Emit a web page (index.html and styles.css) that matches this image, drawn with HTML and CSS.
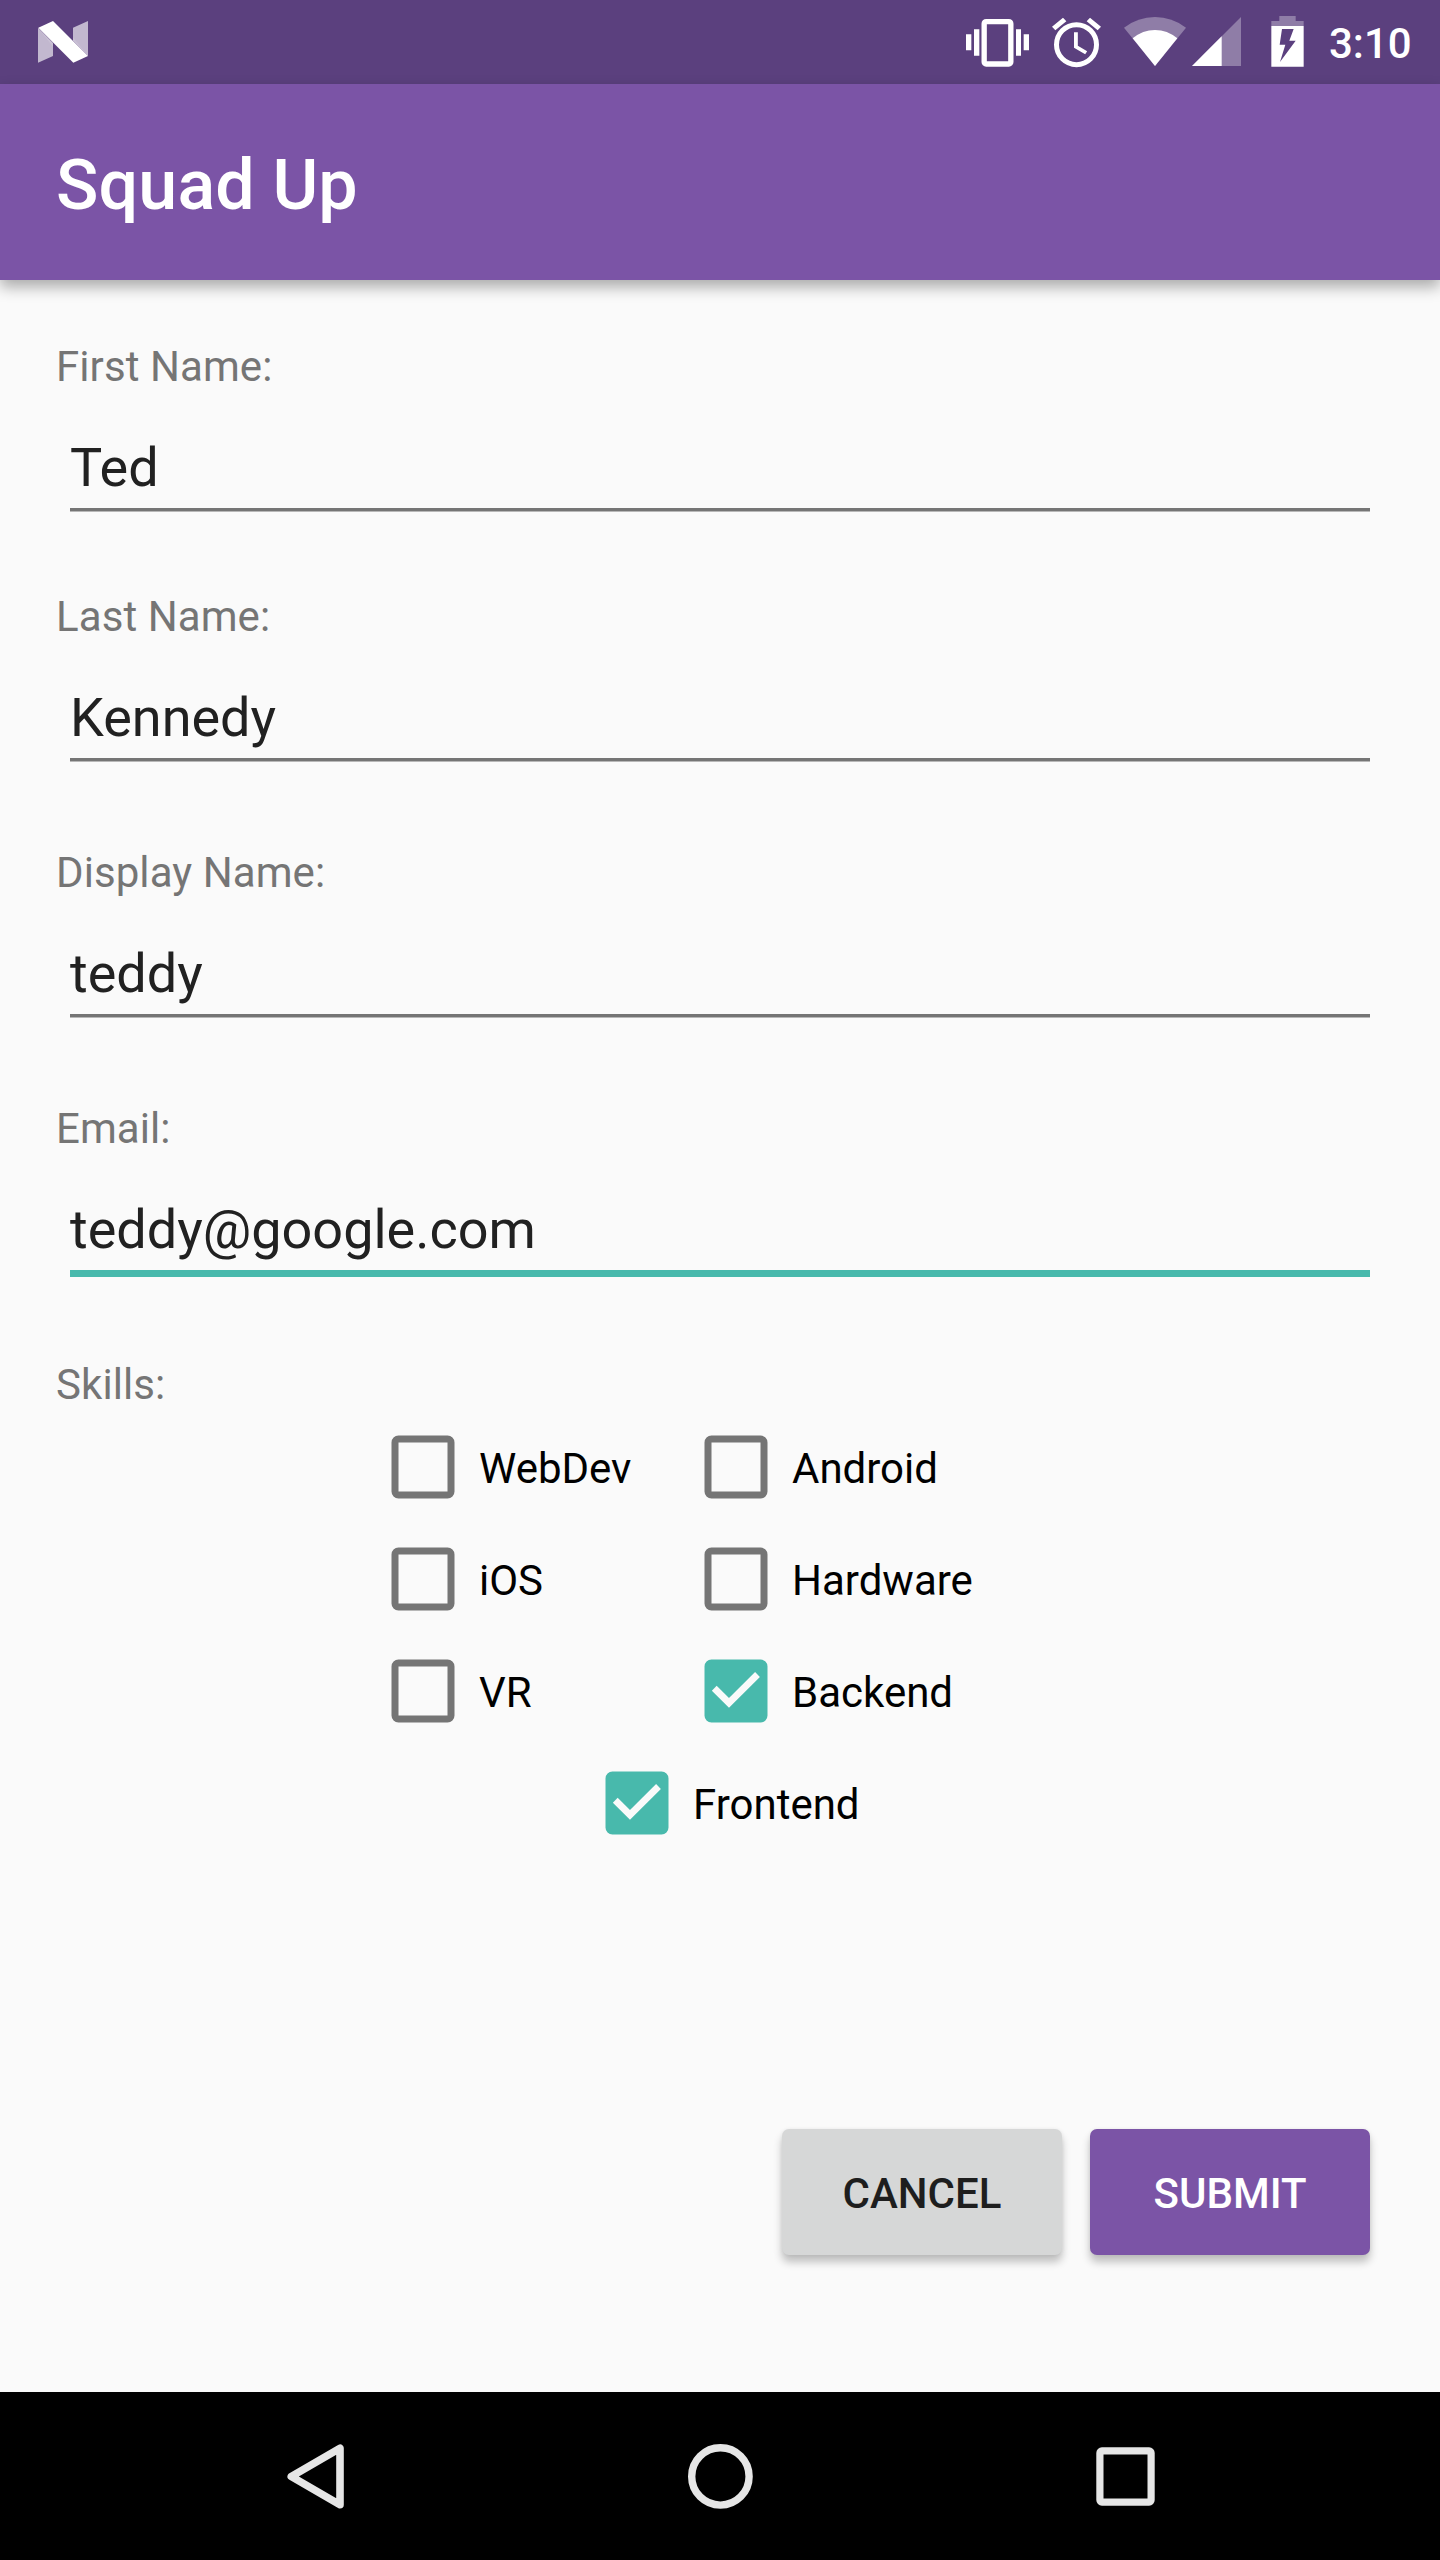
FILE: index.html
```html
<!DOCTYPE html>
<html lang="en">
<head>
<meta charset="utf-8">
<title>Squad Up</title>
<link rel="stylesheet" href="styles.css">
</head>
<body>
<svg class="defs" width="0" height="0" aria-hidden="true">
  <symbol id="box-off" viewBox="0 0 24 24"><rect x="4" y="4" width="16" height="16" rx="1" fill="none" stroke="#757575" stroke-width="2"/></symbol>
  <symbol id="box-on" viewBox="0 0 24 24"><path fill="#48b9ac" d="M19 3H5a2 2 0 0 0-2 2v14a2 2 0 0 0 2 2h14a2 2 0 0 0 2-2V5a2 2 0 0 0-2-2zM10 16.8l-4.9-4.9 1.38-1.38L10 14l7.45-7.4 1.38 1.38z"/></symbol>
</svg>
<div class="screen">
  <header class="status">
    <svg class="logo" width="50" height="42" viewBox="114 63 150 126" fill="#fff">
      <path opacity=".63" d="M114 83L159 129V168L114 188zM219 83L264 63V168L219 122z"/>
      <path opacity=".12" d="M114 83L159 129V140zM264 168L219 122V112z"/>
      <path d="M115 83L159 63L264 168L220 188z"/>
    </svg>
    <div class="indicators">
      <svg class="vibrate" width="63" height="52" viewBox="78 48 189 156" fill="#fff">
        <path d="M78 103h16v48H78zM102 88h16v79h-16zM228 88h15v79h-15zM251 103h16v48h-16z"/>
        <rect x="132.500" y="65" width="80" height="127" rx="6" fill="none" stroke="#fff" stroke-width="16"/>
      </svg>
      <svg class="alarm" width="49" height="52" viewBox="336 48 147 156" fill="#fff">
        <circle cx="409.500" cy="134" r="60" fill="none" stroke="#fff" stroke-width="15"/>
        <path d="M336 80L369 53L379 64L346 91zM483 80L450 53L440 64L473 91zM402 97h11.500v40l28 17-6 9-33.500-20z"/>
      </svg>
      <svg class="wifi" width="62" height="52" viewBox="552 48 186 156" fill="#fff">
        <path opacity=".32" d="M645 198L552 83Q594 51 645 51T738 83z"/>
        <path d="M645 198L578 115Q608 90 645 90T712 115z"/>
      </svg>
      <svg class="signal" width="49" height="52" viewBox="36 48 147 156" fill="#fff">
        <path opacity=".32" d="M36 198L183 51V198z"/><path d="M36 198L125 109V198z"/>
      </svg>
      <svg class="battery" width="33" height="52" viewBox="273 48 99 156" fill="#fff">
        <path opacity=".32" d="M298 48h49v15h24v15h-97V63h24z"/>
        <path fill-rule="evenodd" d="M274 78h97v122h-97zM306 87L299 134H316L300 186L347 122H328L341 87z"/>
      </svg>
      <span class="time">3:10</span>
    </div>
  </header>
  <div class="appbar"><h1 class="title">Squad Up</h1></div>
  <main class="form">
    <div class="field field-first"><div class="label">First Name:</div><div class="input">Ted</div></div>
    <div class="field"><div class="label">Last Name:</div><div class="input">Kennedy</div></div>
    <div class="field"><div class="label">Display Name:</div><div class="input">teddy</div></div>
    <div class="field"><div class="label">Email:</div><div class="input focused">teddy@google.com</div></div>
    <div class="label">Skills:</div>
    <div class="skills">
      <div class="option"><svg class="box"><use href="#box-off"/></svg><span class="option-text">WebDev</span></div>
      <div class="option"><svg class="box"><use href="#box-off"/></svg><span class="option-text">Android</span></div>
      <div class="option"><svg class="box"><use href="#box-off"/></svg><span class="option-text">iOS</span></div>
      <div class="option"><svg class="box"><use href="#box-off"/></svg><span class="option-text">Hardware</span></div>
      <div class="option"><svg class="box"><use href="#box-off"/></svg><span class="option-text">VR</span></div>
      <div class="option"><svg class="box"><use href="#box-on"/></svg><span class="option-text">Backend</span></div>
    </div>
    <div class="option last"><svg class="box"><use href="#box-on"/></svg><span class="option-text">Frontend</span></div>
    <div class="actions">
      <div class="button">CANCEL</div>
      <div class="button primary">SUBMIT</div>
    </div>
  </main>
  <nav class="navbar">
    <svg width="168" height="168" viewBox="0 0 168 168"><path d="M109 56.200V112.800L60.300 84.500z" fill="none" stroke="#e6e6e6" stroke-width="7.600" stroke-linejoin="round"/></svg>
    <svg width="168" height="168" viewBox="0 0 168 168"><circle cx="84.400" cy="84.400" r="28.700" fill="none" stroke="#e6e6e6" stroke-width="7.400"/></svg>
    <svg width="168" height="168" viewBox="0 0 168 168"><rect x="58.900" y="58.900" width="51.200" height="51.200" rx="2" fill="none" stroke="#e6e6e6" stroke-width="7.200"/></svg>
  </nav>
</div>
</body>
</html>
```
FILE: styles.css
```css
* { box-sizing: border-box; }
body { margin: 0; font-family: Roboto, sans-serif; }
.defs { position: absolute; }
.screen {
  width: 1440px;
  height: 2560px;
  display: flex;
  flex-direction: column;
  background: #fafafa;
  overflow: hidden;
}
.status {
  flex: none;
  height: 84px;
  display: flex;
  justify-content: space-between;
  background: #5b407e;
  padding: 0 29px 0 38px;
}
.logo { margin-top: 21px; }
.indicators { display: flex; padding-top: 16px; }
.vibrate { margin-right: 23px; }
.alarm { margin-right: 23px; }
.wifi { margin-right: 6px; }
.signal { margin-right: 30px; }
.battery { margin-right: 25px; }
.time {
  width: 82px;
  height: 49px;
  margin-top: 3px;
  font-size: 42px;
  line-height: 49px;
  font-weight: 500;
  color: #fff;
  white-space: nowrap;
}
.appbar {
  flex: none;
  height: 196px;
  display: flex;
  align-items: center;
  padding: 6px 56px 0;
  background: #7b54a6;
  box-shadow: 0 7px 14px rgba(0, 0, 0, .32);
}
.title { margin: 0; font-size: 70px; line-height: 82px; font-weight: 500; color: #fff; letter-spacing: .15px; }
.form { flex: 1; padding: 62px 56px 0; }
.field { height: 256px; }
.field-first { height: 250px; }
.label { font-size: 42px; line-height: 49px; color: #757575; letter-spacing: .08px; }
.input {
  margin: 44px 14px 0;
  padding-bottom: 7px;
  font-size: 54px;
  line-height: 66px;
  color: #212121;
  border-bottom: 3px solid #757575;
  box-shadow: 0 1px #b8b8b8;
}
.input.focused { border-bottom: 7px solid #48b9ac; box-shadow: none; }
.skills {
  display: grid;
  grid-template-columns: 313px 313px;
  grid-auto-rows: 112px;
  margin: 2px 0 0 311px;
}
.option {
  display: flex;
  align-items: center;
  height: 112px;
  font-size: 42px;
  line-height: 49px;
  color: #000;
}
.option-text { padding-top: 3px; }
.box { flex: none; width: 84px; height: 84px; margin: 0 14px; }
.last { margin-left: 525px; }
.actions {
  display: flex;
  justify-content: flex-end;
  gap: 28px;
  padding: 270px 14px 0 0;
}
.button {
  width: 280px;
  height: 126px;
  padding-top: 2px;
  border-radius: 7px;
  background: #d6d7d7;
  box-shadow: 0 7px 8px rgba(0, 0, 0, .24), 0 0 4px rgba(0, 0, 0, .06);
  color: #1e1e1e;
  font-size: 42px;
  line-height: 126px;
  font-weight: 500;
  text-align: center;
}
.primary { background: #7b54a6; color: #fff; }
.navbar {
  flex: none;
  height: 168px;
  display: flex;
  justify-content: center;
  gap: 237px;
  background: #000;
}
```
